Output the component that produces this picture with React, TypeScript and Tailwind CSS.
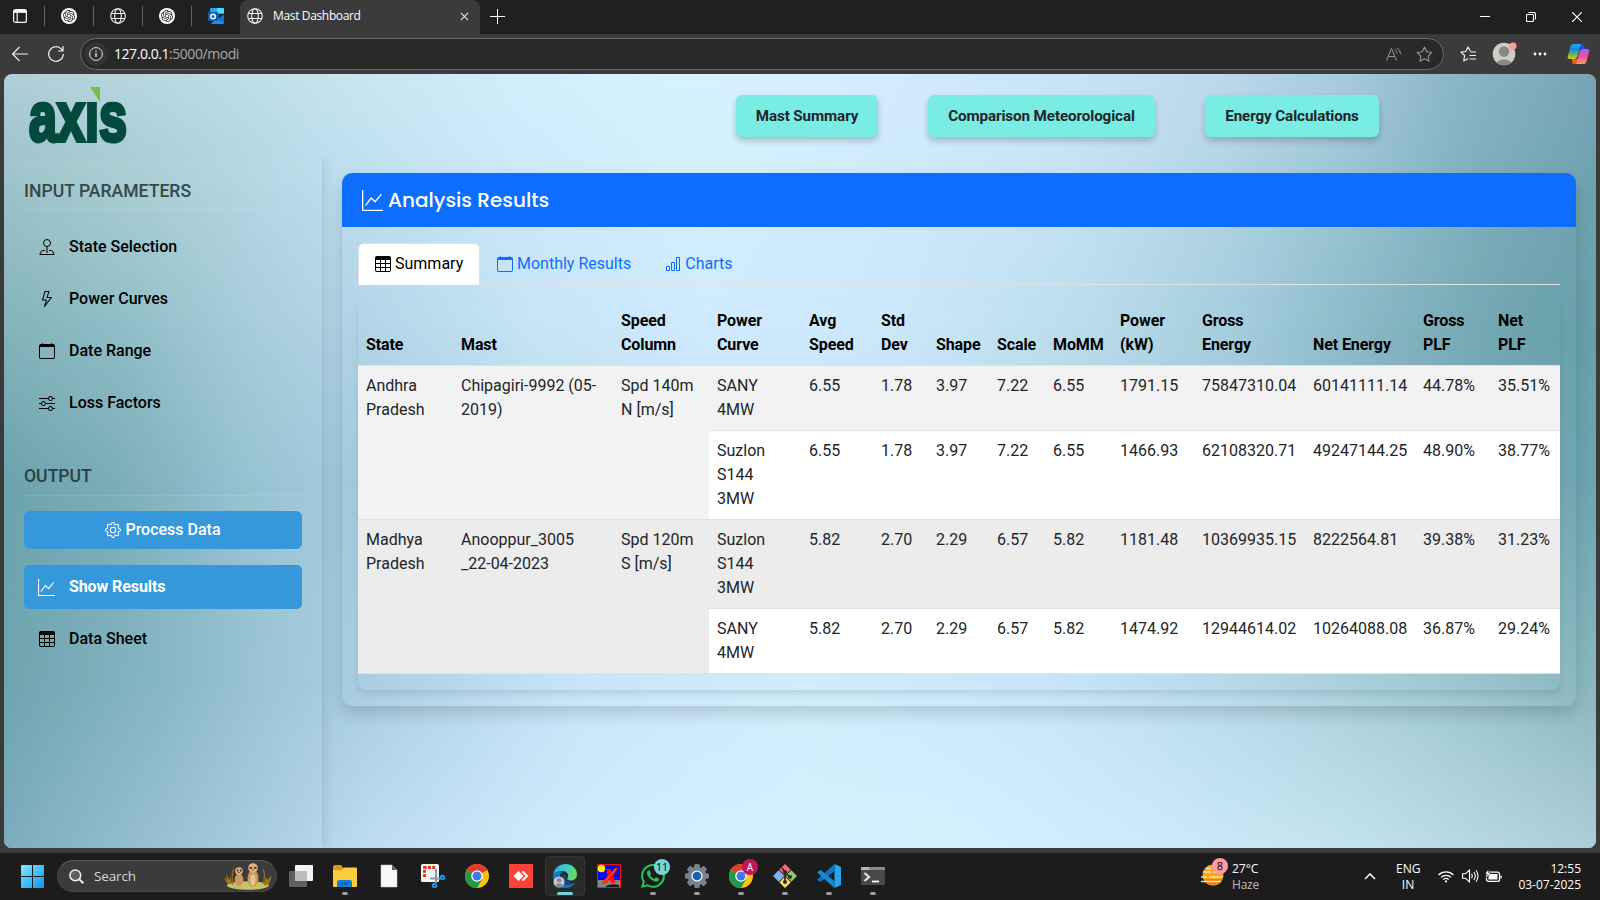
import React from "react";
import {
  BsLightning,
  BsCalendar,
  BsSliders,
  BsGear,
  BsGraphUp,
  BsTable,
  BsBarChart,
  BsWhatsapp,
} from "react-icons/bs";
import { SiOpenai } from "react-icons/si";

const Globe = () => (
  <svg width="16" height="16" viewBox="0 0 16 16" fill="none" stroke="#f2f2f2" strokeWidth="1.1">
    <circle cx="8" cy="8" r="7.3" />
    <ellipse cx="8" cy="8" rx="3.3" ry="7.3" />
    <path d="M1.3 5.5h13.4M1.3 10.5h13.4" />
  </svg>
);

const OpenAiTab = () => (
  <span className="flex h-4 w-4 items-center justify-center rounded-full bg-white text-[#222]">
    <SiOpenai size={12} />
  </span>
);

const Outlook = () => (
  <svg width="16" height="16" viewBox="0 0 16 16">
    <path d="M3 0h12a1 1 0 0 1 1 1v5H2V1a1 1 0 0 1 1-1z" fill="#28a8ea" />
    <path d="M9 0h6a1 1 0 0 1 1 1v4H9z" fill="#50d9ff" />
    <path d="M2 5h9v4H2z" fill="#0078d4" />
    <path d="M4 16h11a1 1 0 0 0 1-1V7l-8 5-5 3z" fill="#1a94e6" />
    <path d="M10 11l6-4v8z" fill="#1373c4" />
    <rect x="0" y="4" width="10" height="9" rx="1" fill="#0f5fb5" />
    <circle cx="5" cy="8.5" r="2.3" fill="none" stroke="#fff" strokeWidth="1.4" />
  </svg>
);

function TabBar() {
  const pinned = [<OpenAiTab />, <Globe />, <OpenAiTab />, <Outlook />];
  return (
    <div className="flex h-[34px] items-stretch bg-[#202020]">
      <div className="flex w-11 items-center pl-[13px] pb-0.5">
        <svg width="14" height="14" viewBox="0 0 14 14" fill="none" stroke="#f5f5f5" strokeWidth="1.2">
          <rect x=".6" y=".6" width="12.8" height="12.8" rx="2" />
          <path d="M.8 2.4h12.4" strokeWidth="3" />
          <path d="M4.2 3v10" />
        </svg>
      </div>
      {pinned.map((icon, i) => (
        <div key={i} className="flex w-[49px] items-center pb-0.5">
          <span className="h-5 w-px bg-[#616161]" />
          <span className="ml-4">{icon}</span>
        </div>
      ))}
      <div className="flex w-[240px] items-center rounded-t-lg bg-[#3b3b3b] pb-0.5 pl-[7px] pr-[11px]">
        <Globe />
        <span className="ml-[10px] flex-1 text-[12px] leading-4 tracking-[-0.35px] text-white">Mast Dashboard</span>
        <svg width="9" height="9" viewBox="0 0 10 10" stroke="#e8e8e8" strokeWidth="1.2">
          <path d="M1 1l8 8M9 1l-8 8" />
        </svg>
      </div>
      <div className="flex flex-1 items-center justify-between pb-0.5 pl-[10px] pr-[18px]">
        <svg width="15" height="15" viewBox="0 0 15 15" stroke="#fff" strokeWidth="1">
          <path d="M7.500 0v15M0 7.500h15" />
        </svg>
        <div className="flex items-center gap-9 pt-0.5">
          <svg width="10" height="10" viewBox="0 0 10 10">
            <path d="M0 4.500h10" stroke="#fff" strokeWidth="1" />
          </svg>
          <svg width="10" height="10" viewBox="0 0 10 10" fill="none" stroke="#fff" strokeWidth="1.1">
            <rect x=".5" y="2.5" width="7" height="7" rx="1" />
            <path d="M2.5.5h5a2 2 0 0 1 2 2v5" />
          </svg>
          <svg width="10" height="10" viewBox="0 0 10 10" stroke="#fff" strokeWidth="1.2">
            <path d="M0 0l10 10M10 0L0 10" />
          </svg>
        </div>
      </div>
    </div>
  );
}

const STAR = "M8 1l2.1 4.5 4.9.6-3.6 3.4.9 4.9L8 12l-4.3 2.4.9-4.9L1 6.100l4.900-.6z";

function Toolbar() {
  return (
    <div className="flex h-10 items-center bg-[#3b3b3b] pl-3 pr-[10px]">
      <svg width="16" height="16" viewBox="0 0 16 16" fill="none" stroke="#f2f2f2" strokeWidth="1.1">
        <path d="M16 8H.7M7.500 1L.6 8l6.900 7" />
      </svg>
      <svg className="ml-5" width="16" height="16" viewBox="0 0 16 16" fill="none" stroke="#f2f2f2" strokeWidth="1.2">
        <path d="M15.300 8A7.300 7.300 0 1 1 13.400 3.100L15 4.800M15 0v5h-5" />
      </svg>
      <div className="ml-4 flex h-8 w-[1364px] items-center rounded-full border border-[#6b6b6b] bg-[#292929] pl-[3px] pr-[10px]">
        <span className="flex h-6 w-6 items-center justify-center rounded-full bg-[#333]">
          <svg width="14" height="14" viewBox="0 0 14 14" fill="none" stroke="#e6e6e6">
            <circle cx="7" cy="7" r="6.400" />
            <path d="M7 6v4" strokeWidth="1.300" />
            <path d="M7 3.500v1.300" strokeWidth="1.300" />
          </svg>
        </span>
        <span className="ml-[6px] flex-1 pb-px text-[14px] tracking-[-0.45px] text-white">
          127.0.0.1<span className="text-[#a8a8a8]">:5000/modi</span>
        </span>
        <svg width="16" height="14" viewBox="0 0 16 14" fill="none" stroke="#999" strokeWidth="1">
          <path d="M.5 13.500L5.500 1.500l5 12M2.300 9.500h6.400M9 2.500q2 1.500 2 4M11 .8q3.500 2 3.500 6" />
        </svg>
        <svg className="ml-[14px]" width="17" height="17" viewBox="0 0 16 16" fill="none" stroke="#999">
          <path d={STAR} strokeLinejoin="round" />
        </svg>
      </div>
      <svg className="ml-4" width="17" height="17" viewBox="0 0 17 17" fill="none" stroke="#f2f2f2" strokeWidth="1.100">
        <path d="M10.500 5.200L8 1 5.800 5.500 1 6.100l3.600 3.400-.9 5.500L8 12.500M10.500 6H16M9.500 9.500H16M9.500 13H16" strokeLinejoin="round" />
      </svg>
      <svg className="ml-[15px]" width="25" height="25" viewBox="0 0 25 25">
        <circle cx="12" cy="12" r="11.300" fill="#cfccc8" />
        <circle cx="12" cy="9.500" r="5.200" fill="#8a8681" />
        <path d="M4.500 20.400a9 6.500 0 0 1 15 0A11.300 11.300 0 0 1 4.500 20.400z" fill="#8a8681" />
        <circle cx="21" cy="4" r="3.600" fill="#fb9c99" />
      </svg>
      <svg className="ml-4" width="14" height="4" viewBox="0 0 14 4" fill="#fff">
        <circle cx="2" cy="2" r="1.400" />
        <circle cx="7" cy="2" r="1.400" />
        <circle cx="12" cy="2" r="1.400" />
      </svg>
      <svg className="ml-[20px]" width="23" height="22" viewBox="0 0 23 22">
        <defs>
          <linearGradient id="cpA" x1="0" y1="0" x2="0" y2="1">
            <stop offset="0" stopColor="#23a8f2" />
            <stop offset=".35" stopColor="#1787e8" />
            <stop offset=".65" stopColor="#4fb560" />
            <stop offset="1" stopColor="#f4c20d" />
          </linearGradient>
          <linearGradient id="cpB" x1="0" y1="0" x2="0" y2="1">
            <stop offset="0" stopColor="#a45cf0" />
            <stop offset=".5" stopColor="#e8539b" />
            <stop offset="1" stopColor="#fd9a5b" />
          </linearGradient>
        </defs>
        <path d="M11 1h4q2 0 2.700 2.500L18.500 6h-5z" fill="#1554c8" />
        <path d="M6 21h5.500l1-5H5q0 5 1 5z" fill="#ee5a2b" />
        <path d="M6 1h8l-3.500 12q-.8 3-3 3H2.500Q0 16 1 12.500L3.500 3.500Q4.200 1 6 1z" fill="url(#cpA)" />
        <path d="M15 6h5.500Q23 6 22 9.500l-2.500 9Q18.800 21 17 21H9l3.500-12Q13.300 6 15 6z" fill="url(#cpB)" />
      </svg>
    </div>
  );
}

/* Soft backdrop: horizontal colour bands, each fading into the one above it. */
function Backdrop() {
  return (
    <div className="absolute inset-0 -z-10">
      <div className="absolute inset-0 bg-[linear-gradient(90deg,#b0ced8_0%,#bbdce5_13%,#c9e8f2_24%,#d2effb_33%,#d6f2ff_42%,#d6eeff_52%,#cce6f9_64%,#bdd9ec_76%,#a8cbde_84%,#8bb6c6_91%,#78a5b6_100%)]" />
      <div className="absolute inset-0 bg-[linear-gradient(90deg,#98c0c6_0%,#a8cdd4_10%,#bbdcec_21%,#cbe8fa_32%,#d3f0fb_44%,#cee9fc_56%,#c5e3f3_67%,#b0d3e3_77%,#95c0ce_86%,#7dadba_93%,#6da1ae_100%)] [mask-image:linear-gradient(180deg,transparent_0%,black_15%)]" />
      <div className="absolute inset-0 bg-[linear-gradient(90deg,#7fb0b8_0%,#8dbcc4_8%,#a5cbda_16%,#b0d4e6_22%,#c5e4f4_33%,#cfeafd_44%,#cbe7f9_56%,#b9dcea_68%,#a2cbdb_78%,#85b4c1_87%,#6ea4ae_95%,#68a0aa_100%)] [mask-image:linear-gradient(180deg,transparent_15%,black_33%)]" />
      <div className="absolute inset-0 bg-[linear-gradient(90deg,#67a0a9_0%,#77aab5_7%,#92c0cf_15%,#a3cadd_22%,#bdddec_35%,#c9e6f8_50%,#bcdcec_63%,#a5cddd_75%,#83b3c0_88%,#6ca4af_100%)] [mask-image:linear-gradient(180deg,transparent_33%,black_52%)]" />
      <div className="absolute inset-0 bg-[linear-gradient(90deg,#69a1ab_0%,#7dafbe_8%,#9ac4d5_17%,#add0e4_24%,#c8e5f8_36%,#d0edfa_50%,#c8e6f8_65%,#b6d8e7_78%,#9fc9d0_90%,#89b6bd_100%)] [mask-image:linear-gradient(180deg,transparent_52%,black_78%)]" />
      <div className="absolute inset-0 bg-[linear-gradient(90deg,#78a9bb_0%,#90bbcb_8%,#a9cee0_17%,#bedcf0_23%,#cce9fb_33%,#d4effe_44%,#d4f1fe_58%,#cceafb_72%,#c3e3ec_84%,#adcdd6_100%)] [mask-image:linear-gradient(180deg,transparent_78%,black_100%)]" />
    </div>
  );
}

function Logo() {
  return (
    <div className="relative h-[58px] w-[100px]">
      <svg className="overflow-visible" width="100" height="58" viewBox="0 0 100 58">
        <defs>
          <clipPath id="xheight">
            <rect x="-4" y="14.500" width="108" height="46" />
          </clipPath>
        </defs>
        <text
          x="1"
          y="54"
          textLength="98"
          lengthAdjust="spacingAndGlyphs"
          fontFamily="Liberation Sans, Arial, sans-serif"
          fontWeight="700"
          fontSize="71"
          fill="#024a3d"
          stroke="#024a3d"
          strokeWidth="4"
          clipPath="url(#xheight)"
        >
          axis
        </text>
        <path d="M62 0h10v15z" fill="#76c04a" />
      </svg>
    </div>
  );
}

const GeoPin = ({ size }: { size: number }) => (
  <svg width={size} height={size} viewBox="0 0 16 16" fill="none" stroke="currentColor">
    <circle cx="8" cy="4" r="3.500" />
    <path d="M8 7.500V14" />
    <path d="M6 11.500H3.500Q2.800 11.500 2.500 12L.8 15.500h14.400L13.500 12q-.3-.5-1-.5H10" strokeLinejoin="round" />
  </svg>
);

const NAV = [
  { label: "State Selection", Icon: GeoPin },
  { label: "Power Curves", Icon: BsLightning },
  { label: "Date Range", Icon: BsCalendar },
  { label: "Loss Factors", Icon: BsSliders },
];

function Sidebar() {
  return (
    <aside className="w-[318px] shrink-0 bg-white/[0.04] px-5 pt-[22px] shadow-[2px_0_10px_rgba(0,0,0,0.1)] [clip-path:inset(0_-14px_0_0)]">
      <h5 className="h-[30px] border-b border-white/10 text-[17.6px] font-medium leading-[22px] text-[#34494c]">
        INPUT PARAMETERS
      </h5>
      <nav className="mt-[15px] flex flex-col gap-2">
        {NAV.map(({ label, Icon }) => (
          <a key={label} className="flex h-11 items-center pl-[15px] text-[16px] font-medium text-black">
            <Icon size={16} />
            <span className="ml-[14px]">{label}</span>
          </a>
        ))}
      </nav>
      <h5 className="mt-10 h-[31px] border-b border-white/10 text-[17.6px] font-medium leading-[22px] text-[#2b4145]">
        OUTPUT
      </h5>
      <button className="mt-[15px] flex h-[38px] w-full items-center justify-center gap-1 rounded-md bg-[#3498db] text-[16px] font-medium text-white">
        <BsGear size={16} />
        Process Data
      </button>
      <a className="mt-4 flex h-11 items-center rounded-[5px] bg-[#3498db] pl-[14px] text-[16px] font-bold text-white">
        <BsGraphUp size={17} />
        <span className="ml-[14px] tracking-[-0.1px]">Show Results</span>
      </a>
      <a className="mt-2 flex h-11 items-center pl-[15px] text-[16px] font-medium text-black">
        <BsTable size={16} />
        <span className="ml-[14px]">Data Sheet</span>
      </a>
    </aside>
  );
}

const COLS = [95, 160, 96, 92, 72, 55, 61, 56, 67, 82, 111, 110, 75, 70];
const HEADS = [
  ["State"], ["Mast"], ["Speed", "Column"], ["Power", "Curve"], ["Avg", "Speed"], ["Std", "Dev"], ["Shape"],
  ["Scale"], ["MoMM"], ["Power", "(kW)"], ["Gross", "Energy"], ["Net Energy"], ["Gross", "PLF"], ["Net", "PLF"],
];

type Group = { lead: string[][]; bg: string; rows: string[][] };
const GROUPS: Group[] = [
  {
    lead: [["Andhra", "Pradesh"], ["Chipagiri-9992 (05-", "2019)"], ["Spd 140m", "N [m/s]"]],
    bg: "bg-[#f2f2f2]",
    rows: [
      ["SANY 4MW", "6.55", "1.78", "3.97", "7.22", "6.55", "1791.15", "75847310.04", "60141111.14", "44.78%", "35.51%"],
      ["Suzlon S144 3MW", "6.55", "1.78", "3.97", "7.22", "6.55", "1466.93", "62108320.71", "49247144.25", "48.90%", "38.77%"],
    ],
  },
  {
    lead: [["Madhya", "Pradesh"], ["Anooppur_3005", "_22-04-2023"], ["Spd 120m", "S [m/s]"]],
    bg: "bg-[#ececec]",
    rows: [
      ["Suzlon S144 3MW", "5.82", "2.70", "2.29", "6.57", "5.82", "1181.48", "10369935.15", "8222564.81", "39.38%", "31.23%"],
      ["SANY 4MW", "5.82", "2.70", "2.29", "6.57", "5.82", "1474.92", "12944614.02", "10264088.08", "36.87%", "29.24%"],
    ],
  },
];

function ResultsTable() {
  return (
    <table className="w-full table-fixed border-separate border-spacing-0 text-left text-[16px] leading-6 text-[#212529]">
      <colgroup>
        {COLS.map((w, i) => (
          <col key={i} style={{ width: w }} />
        ))}
      </colgroup>
      <thead>
        <tr>
          {HEADS.map((h, i) => (
            <th key={i} className="whitespace-nowrap border-b border-[#dee2e6] py-2 pl-2 align-bottom font-bold tracking-[-0.1px] text-black">
              {h[0]}
              {h[1] && (
                <>
                  <br />
                  {h[1]}
                </>
              )}
            </th>
          ))}
        </tr>
      </thead>
      <tbody>
        {GROUPS.map((g, gi) =>
          g.rows.map((r, ri) => (
            <tr key={`${gi}-${ri}`} className={ri === 0 ? g.bg : "bg-white"}>
              {ri === 0 &&
                g.lead.map((lines, i) => (
                  <td key={i} rowSpan={2} className={`whitespace-nowrap border-b border-[#dee2e6] p-2 align-top ${g.bg}`}>
                    {lines[0]}
                    <br />
                    {lines[1]}
                  </td>
                ))}
              {r.map((c, i) => (
                <td key={i} className={i === 0 ? "border-b border-[#dee2e6] py-2 pl-2 pr-6 align-top" : "border-b border-[#dee2e6] py-2 pl-2 align-top"}>
                  {c}
                </td>
              ))}
            </tr>
          )),
        )}
      </tbody>
    </table>
  );
}

function Page() {
  return (
    <div className="relative isolate mx-1 flex h-[774px] flex-col overflow-hidden rounded-lg font-['Roboto',sans-serif]">
      <Backdrop />
      <header className="flex h-[84px] shrink-0 items-start pl-6 pt-[13px]">
        <Logo />
        <div className="ml-[608px] mt-2 flex gap-[50px] text-[15.2px] font-bold tracking-[-0.1px] text-[#212529]">
          <button className="h-[42px] w-[142px] rounded-md bg-[#79ede3] shadow-[0_4px_6px_rgba(0,0,0,0.2)]">Mast Summary</button>
          <button className="h-[42px] w-[227px] rounded-md bg-[#79ede3] shadow-[0_4px_6px_rgba(0,0,0,0.2)]">Comparison Meteorological</button>
          <button className="h-[42px] w-[174px] rounded-md bg-[#79ede3] shadow-[0_4px_6px_rgba(0,0,0,0.2)]">Energy Calculations</button>
        </div>
      </header>
      <div className="flex flex-1">
        <Sidebar />
        <main className="flex-1 pl-5 pr-5 pt-[15px]">
          <section className="h-[533px] overflow-visible rounded-[10px] shadow-[0_8px_16px_rgba(0,0,0,0.15)]">
            <div className="flex h-[54px] items-center rounded-t-[10px] bg-[#0d6efd] pl-5 text-white">
              <BsGraphUp size={21} />
              <h5 className="ml-[5px] font-['Poppins','Inter',sans-serif] text-[20px] font-medium leading-6">Analysis Results</h5>
            </div>
            <div className="px-4 pt-4">
              <div className="flex h-[42px] border-b border-[#dee2e6] text-[16px] text-[#0d6efd]">
                <a className="flex h-[42px] w-[122px] items-center gap-1 rounded-t-md border border-b-0 border-[#dee2e6] bg-white pb-0.5 pl-4 text-black">
                  <BsTable size={16} />
                  Summary
                </a>
                <a className="flex h-[41px] items-center gap-1 px-[17px]">
                  <BsCalendar size={16} />
                  Monthly Results
                </a>
                <a className="flex h-[41px] items-center gap-1 px-[17px]">
                  <BsBarChart size={16} />
                  Charts
                </a>
              </div>
              <div className="mt-[15px] h-[390px] rounded-lg pt-px shadow-[0_4px_6px_rgba(0,0,0,0.1)]">
                <ResultsTable />
              </div>
            </div>
          </section>
        </main>
      </div>
    </div>
  );
}

const Chrome = () => (
  <svg width="24" height="24" viewBox="0 0 24 24">
    <circle cx="12" cy="12" r="12" fill="#fbc116" />
    <path d="M12 12L1.600 6A12 12 0 0 1 22.400 6z" fill="#e33b2e" />
    <path d="M1.600 6A12 12 0 0 0 12 24l5.200-9L12 12z" fill="#229a4a" />
    <path d="M12 6h10.400" stroke="#e33b2e" strokeWidth="1" />
    <circle cx="12" cy="12" r="5.800" fill="#fff" />
    <circle cx="12" cy="12" r="4.500" fill="#3b7ded" />
  </svg>
);

const TaskView = () => (
  <svg width="24" height="24" viewBox="0 0 24 24">
    <rect x="6" y="1" width="18" height="16" rx="1" fill="#f3f3f3" />
    <rect x="0" y="7" width="18" height="16" rx="1" fill="#6c6c6c" opacity=".85" />
    <rect x="6" y="7" width="12" height="10" fill="#bdbdbd" />
  </svg>
);

const Folder = () => (
  <svg width="24" height="24" viewBox="0 0 24 24">
    <path d="M0 3q0-2 2-2h6l2.500 3H23v8H0z" fill="#d99a10" />
    <path d="M0 6h9l2-2.500h12q1 0 1 1V22q0 1-1 1H1q-1 0-1-1z" fill="#fccb40" />
    <path d="M4 23v-5q0-2 2-2h11q2 0 2 2v5z" fill="#1380d4" />
    <path d="M7.500 19.500h8" stroke="#0b569a" strokeWidth="1.500" />
  </svg>
);

const Doc = () => (
  <svg width="18" height="24" viewBox="0 0 18 24">
    <path d="M1 1h11l5 5v17H1z" fill="#f8f8f8" stroke="#cfcfcf" strokeWidth=".5" />
    <path d="M12 1v5h5z" fill="#5a5a5a" />
  </svg>
);

const Snip = () => (
  <svg width="26" height="26" viewBox="0 0 26 26">
    <rect x="1" y="1" width="18" height="18" rx="1.500" fill="#f2f4f6" />
    <path d="M4.500 14V4.500H16" fill="none" stroke="#e03c14" strokeWidth="3" strokeDasharray="3 1.300" />
    <path d="M16 6v14M10 15.500h10" stroke="#8b98a5" strokeWidth="2" />
    <circle cx="22.500" cy="14.500" r="1.800" fill="none" stroke="#1f93e0" strokeWidth="2" />
    <circle cx="14.500" cy="22.500" r="1.800" fill="none" stroke="#1f93e0" strokeWidth="2" />
  </svg>
);

const AnyDesk = () => (
  <svg width="24" height="24" viewBox="0 0 24 24">
    <rect width="24" height="24" fill="#fb4338" />
    <path d="M4.500 12L9.500 7l5 5-5 5z" fill="#fff" />
    <path d="M13.500 7.500L18 12l-4.500 4.500" fill="none" stroke="#fff" strokeWidth="2" />
  </svg>
);

const Edge = () => (
  <svg width="24" height="24" viewBox="0 0 24 24">
    <defs>
      <linearGradient id="eg" x1="0" y1="0" x2="1" y2=".3">
        <stop offset="0" stopColor="#27a9e6" />
        <stop offset=".5" stopColor="#35c8d4" />
        <stop offset="1" stopColor="#62dc68" />
      </linearGradient>
    </defs>
    <path d="M0 12C1 4 6 0 12.500 0 20 0 24 5.500 24 10.500c0 4-3 6-6.500 6-3 0-4-1-3-2.500 2-3-.5-7-5-7C5 7 1 9 0 12z" fill="url(#eg)" />
    <path d="M0 12c1-4 6-6 10.500-4.200C6 8 5 18 13 20.500c4 1 7-.5 9.500-2C20 22.500 16 24 12 24 5 24-.5 18.500 0 12z" fill="#1674c8" />
    <path d="M9 12c-2 5 2 9 6.500 9 3 0 5.500-1 7-2.500-6 1.500-11-1.500-10-7-1.500-1.500-3-.5-3.500.5z" fill="#124b94" />
    <circle cx="6" cy="18" r="5.500" fill="#c8c8c8" />
    <circle cx="6" cy="16.300" r="2.200" fill="#858585" />
    <path d="M2.200 21.500q3.800-4.500 7.600 0Q6 25 2.200 21.500z" fill="#858585" />
  </svg>
);

const XApp = () => (
  <svg width="24" height="24" viewBox="0 0 24 24">
    <rect x=".5" y=".5" width="23" height="23" fill="#0707e6" stroke="#f01010" />
    <rect x="1" y="16" width="22" height="7" fill="#858585" />
    <circle cx="4.500" cy="4.500" r="3.800" fill="#ffee10" />
    <path d="M9 22q6-3 13-1v2H9z" fill="#161616" />
    <path d="M9.500 5h4l1.500 3.500L17.500 4H21L16.500 12l2 7H14l-1.500-3.500L9 19.500H5l5.500-8z" fill="#f8140c" />
    <path d="M19 4.500L7 19" stroke="#ff7a10" strokeWidth="1" />
  </svg>
);

const WhatsApp = () => (
  <div className="relative h-6 w-6 text-[#22c55e]">
    <BsWhatsapp size={24} />
    <span className="absolute -top-[5px] left-[13px] flex h-4 w-4 items-center justify-center rounded-full bg-[#75d5df] text-[10.500px] leading-4 text-black">11</span>
  </div>
);

const Settings = () => (
  <svg width="24" height="24" viewBox="0 0 24 24">
    <g fill="#79838e">
      <circle cx="12" cy="12" r="9.300" />
      {[0, 45, 90, 135].map((a) => (
        <rect key={a} x="9.200" y="0" width="5.600" height="24" rx="1.500" transform={`rotate(${a} 12 12)`} />
      ))}
    </g>
    <circle cx="12" cy="12" r="5.600" fill="#f0f3f6" />
    <circle cx="12" cy="12" r="4.300" fill="#1465b0" />
  </svg>
);

const ChromeA = () => (
  <div className="relative h-6 w-6">
    <Chrome />
    <span className="absolute -top-[5px] left-[13px] flex h-4 w-4 items-center justify-center rounded-full bg-[#c2185b] text-[10px] leading-4 text-white">A</span>
  </div>
);

const Git = () => (
  <svg width="24" height="24" viewBox="0 0 24 24">
    <path d="M12 0l5.700 5.700L12 11.400 6.300 5.700z" fill="#f17173" />
    <path d="M18.300 6.300L24 12l-5.700 5.700-5.700-5.700z" fill="#8ecb6c" />
    <path d="M5.700 6.300l5.700 5.700-5.700 5.700L0 12z" fill="#80b0f4" />
    <path d="M12 12.600l5.700 5.700L12 24l-5.700-5.700z" fill="#f9e070" />
    <path d="M9 4l3 4v11M12 9l5 4" fill="none" stroke="#2e2620" strokeWidth="1.600" />
    <circle cx="12" cy="8" r="2" fill="#2e2620" />
    <circle cx="12" cy="18" r="2" fill="#2e2620" />
    <circle cx="17" cy="13" r="2" fill="#2e2620" />
  </svg>
);

const VsCode = () => (
  <svg width="24" height="24" viewBox="0 0 24 24">
    <path d="M17.500 0L24 3v18l-6.500 3z" fill="#27a5ee" />
    <path d="M17.500 0v7L3.500 18 0 15.800z" fill="#0b76c4" />
    <path d="M17.500 24v-7L3.500 6 0 8.200z" fill="#158bd8" />
  </svg>
);

const Terminal = () => (
  <svg width="24" height="20" viewBox="0 0 24 20">
    <rect y="1" width="24" height="18" rx="1.200" fill="#484848" />
    <path d="M1 1h22q1 0 1 1v2H0V2q0-1 1-1z" fill="#b8b8b8" />
    <path d="M8 1h16v3H8z" fill="#8b8b8b" />
    <path d="M3.500 7l4.500 4-4.500 4" fill="none" stroke="#e4e4e4" strokeWidth="2.200" />
    <path d="M11 15.500h7" stroke="#fff" strokeWidth="1.800" />
  </svg>
);

const Meerkats = () => (
  <svg width="50" height="27" viewBox="0 0 50 27">
    <ellipse cx="26" cy="22.500" rx="21" ry="4.200" fill="#c4c66a" />
    <path d="M6 21L1 14l4 3-1-6 4 6 0-5 2 9zM42 21l2-8 1 4 5-4-3 8-4 2z" fill="#a87416" />
    <path d="M11 22Q9 10 12 6M41 21q3-9 0-15" fill="none" stroke="#9a6a20" strokeWidth="1.200" />
    <ellipse cx="17" cy="17" rx="4.300" ry="6.500" fill="#cd9b62" />
    <circle cx="17" cy="8" r="3.800" fill="#dab080" />
    <ellipse cx="31" cy="15.500" rx="5.500" ry="8.500" fill="#cb965a" />
    <ellipse cx="31" cy="17" rx="2.600" ry="6" fill="#e6c394" />
    <circle cx="31" cy="5" r="4.800" fill="#dcb27f" />
    <path d="M27.500 4.800H30M32 4.800h2.500M15 7.500h1.500M18 7.500h1.500" stroke="#4a2e26" strokeWidth="1.800" />
    <path d="M30.300 7h1.400M16.400 9.500h1.200" stroke="#3c2018" strokeWidth="1" />
  </svg>
);

type App = { el: React.ReactNode; state?: "running" | "active" };
const APPS: App[] = [
  { el: <TaskView /> },
  { el: <Folder />, state: "running" },
  { el: <Doc /> },
  { el: <Snip /> },
  { el: <Chrome /> },
  { el: <AnyDesk /> },
  { el: <Edge />, state: "active" },
  { el: <XApp /> },
  { el: <WhatsApp />, state: "running" },
  { el: <Settings />, state: "running" },
  { el: <ChromeA />, state: "running" },
  { el: <Git />, state: "running" },
  { el: <VsCode />, state: "running" },
  { el: <Terminal />, state: "running" },
];

function Taskbar() {
  return (
    <div className="flex h-[47px] items-center bg-[#1c1c1c] pb-px text-[12px] leading-4 text-white">
      <svg className="ml-[21px]" width="23" height="23" viewBox="0 0 23 23">
        <defs>
          <linearGradient id="win" x1="0" y1="0" x2="1" y2="1">
            <stop offset="0" stopColor="#7cecff" />
            <stop offset="1" stopColor="#0d94f5" />
          </linearGradient>
        </defs>
        <path d="M0 1q0-1 1-1h10v11H0zM12 0h10q1 0 1 1v10H12zM0 12h11v11H1q-1 0-1-1zM12 12h11v10q0 1-1 1H12z" fill="url(#win)" />
      </svg>
      <div className="ml-[13px] flex h-8 w-[220px] items-center rounded-full border border-[#484848] border-t-[#5c5c5c] bg-[#3b3b3b] pl-[11px] pr-1">
        <svg width="15" height="15" viewBox="0 0 15 15" fill="#606060" stroke="#ececec" strokeWidth="1.500">
          <circle cx="6.300" cy="6.300" r="5.400" />
          <path d="M10.300 10.300l4 4" strokeWidth="2" />
        </svg>
        <span className="ml-[10px] flex-1 text-[13.500px] tracking-[-0.15px] text-[#d6d6d6]">Search</span>
        <Meerkats />
      </div>
      <div className="ml-[2px] flex">
        {APPS.map((a, i) => (
          <div
            key={i}
            className={
              a.state === "active"
                ? "relative mx-0.5 flex h-10 w-10 items-center justify-center rounded border border-[#353535] bg-[#2a2a2a]"
                : "relative mx-0.5 flex h-10 w-10 items-center justify-center"
            }
          >
            {a.el}
            {a.state === "running" && <span className="absolute bottom-[1px] h-[3px] w-1.5 rounded-full bg-[#9b9b9b]" />}
            {a.state === "active" && <span className="absolute bottom-0 h-[3px] w-4 rounded-full bg-[#76d2dd]" />}
          </div>
        ))}
      </div>
      <div className="flex flex-1 items-center">
        <div className="relative ml-[306px] h-[28px] w-[28px]">
          <svg width="24" height="28" viewBox="0 0 24 28">
            <circle cx="12" cy="13" r="10.500" fill="#fba517" />
            <path d="M2.500 17h19q-3 6.500-9.500 6.500T2.500 17z" fill="#f27d12" />
            <path d="M2 10h8M12 10h9M0 15h6M8 15h14M0 19.500h20M5 6.500h5" stroke="#f6e0ae" strokeWidth="1.500" />
          </svg>
          <span className="absolute -top-[4px] left-[11px] flex h-4 w-4 items-center justify-center rounded-full bg-[#ff99a4] text-[11px] text-black">8</span>
        </div>
        <div className="ml-[3px] pt-px">
          <div>27°C</div>
          <div className="tracking-[-0.2px] text-[#bcbcbc]">Haze</div>
        </div>
        <div className="flex-1" />
        <svg width="12" height="7" viewBox="0 0 12 7" fill="none" stroke="#fff" strokeWidth="1.500">
          <path d="M1 6l5-5 5 5" />
        </svg>
        <div className="ml-5 w-6 pt-0.5 text-center">
          <div>ENG</div>
          <div>IN</div>
        </div>
        <svg className="ml-[18px]" width="16" height="13" viewBox="0 0 16 13" fill="none" stroke="#fff" strokeWidth="1.300">
          <path d="M.6 5a10.500 10.500 0 0 1 14.800 0M3 7.400a7 7 0 0 1 10 0M5.300 9.600a4 4 0 0 1 5.400 0" />
          <circle cx="8" cy="11.400" r="1.100" fill="#fff" stroke="none" />
        </svg>
        <svg className="ml-2" width="17" height="14" viewBox="0 0 17 14" fill="none" stroke="#fff" strokeWidth="1.100">
          <path d="M.6 4.800h2.800L7.500 1v12L3.400 9.200H.6zM9.500 4.800q1.500 2.200 0 4.400M11.800 3q3 4 0 8M14 1.200q4 5.800 0 11.600" />
        </svg>
        <svg className="ml-[6px]" width="17" height="14" viewBox="0 0 17 14">
          <rect x="1.500" y="3.100" width="13" height="9.300" rx="2" fill="none" stroke="#fff" strokeWidth="1.200" />
          <rect x="3.500" y="5" width="9" height="5.500" fill="#fff" />
          <path d="M15.500 6v4l1.300-1V7z" fill="#fff" />
          <path d="M3.500 0L0 5h2.200L1.500 9 6 3.800H3.500z" fill="#fff" stroke="#1c1c1c" strokeWidth=".6" />
        </svg>
        <div className="ml-[15px] mr-[19px] w-[64px] whitespace-nowrap pt-px text-right">
          <div>12:55</div>
          <div>03-07-2025</div>
        </div>
      </div>
    </div>
  );
}

export default function App() {
  return (
    <div className="flex h-[900px] w-[1600px] flex-col overflow-hidden bg-[#3b3b3b] font-['Open_Sans','Noto_Sans',sans-serif]">
      <TabBar />
      <Toolbar />
      <Page />
      <div className="h-[5px]" />
      <Taskbar />
    </div>
  );
}
